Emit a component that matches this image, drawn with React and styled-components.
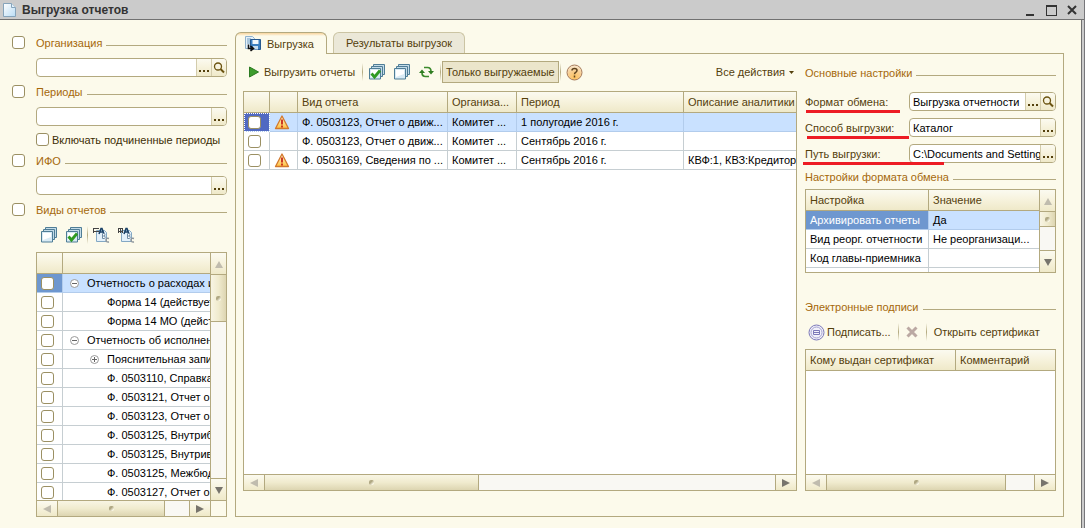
import React from "react";
import styled, { createGlobalStyle, css } from "styled-components";

const GlobalStyle = createGlobalStyle`
  * {
    box-sizing: border-box;
  }
  body {
    margin: 0;
    background: #fcfaeb;
  }
  body,
  button,
  input {
    font-family: "Liberation Sans", Arial, sans-serif;
    font-size: 11px;
    line-height: 14px;
    color: #54400c;
  }
  button {
    margin: 0;
    padding: 0;
    border: 0;
    background: none;
    white-space: nowrap;
  }
`;

const border = "#b3a97f";
const headFill = "linear-gradient(#fbfaf0, #f7f3de 45%, #efe9c9)";

const WindowStyled = styled.div`
  display: flex;
  flex-direction: column;
  height: 100vh;
  min-height: 480px;
  border-right: 1px solid #77777a;
  background: #cbcbcb;
`;

const TitleBar = styled.header`
  display: flex;
  align-items: center;
  flex: none;
  height: 20px;
  padding: 0 5px 0 3px;
  gap: 6px;
  border-bottom: 1px solid #717171;
  h1 {
    flex: 1;
    margin: 0;
    font-size: 12px;
    line-height: 16px;
    font-weight: 700;
    color: #333;
  }
`;

const WindowButtons = styled.div`
  display: flex;
  gap: 7px;
  button {
    width: 14px;
    height: 14px;
  }
  svg {
    display: block;
  }
`;

const Content = styled.main`
  display: flex;
  flex: 1;
  min-height: 0;
  margin-right: 2px;
  padding: 12px 17px 11px 12px;
  gap: 8px;
  border-right: 1px solid #717171;
  background: #fcfaeb;
`;

const Sidebar = styled.aside`
  display: flex;
  flex-direction: column;
  flex: none;
  width: 215px;
  gap: 7px;
  padding-top: 3px;
`;

const Indent = styled.div`
  display: flex;
  flex-direction: column;
  margin-left: 24px;
  ${(props) =>
    props.$fill &&
    css`
      flex: 1;
      min-height: 0;
    `}
`;

const CheckBox = styled.input.attrs({ type: "checkbox" })`
  appearance: none;
  display: block;
  flex: none;
  width: 13px;
  height: 13px;
  margin: 0;
  border: 1px solid #9b9063;
  border-radius: 3px;
  background: #fff;
`;

const CheckLabel = styled.label`
  display: flex;
  align-items: center;
  height: 13px;
  gap: 3px;
  white-space: nowrap;
  color: #3d2e05;
`;

const LegendStyled = styled.div`
  display: flex;
  align-items: center;
  flex: none;
  height: 16px;
  gap: 4px;
  color: #a5680a;
  white-space: nowrap;
  label {
    display: flex;
    gap: 11px;
  }
  &::after {
    content: "";
    flex: 1;
    height: 1px;
    margin-top: 4px;
    background: ${border};
  }
`;

const ComboStyled = styled.div`
  display: flex;
  flex: ${(props) => (props.$grow ? "1" : "none")};
  min-width: 0;
  height: 19px;
  border: 1px solid ${border};
  border-radius: 4px;
  background: #fff;
  overflow: hidden;
  input {
    flex: 1;
    width: 0;
    min-width: 0;
    padding: 0 0 0 3px;
    border: 0;
    outline: 0;
    background: none;
    color: #000;
  }
  button {
    display: flex;
    align-items: center;
    justify-content: center;
    width: 15px;
    border-left: 1px solid #d3ccac;
    background: ${headFill};
  }
`;

const Toolbar = styled.div`
  display: flex;
  align-items: center;
  flex: none;
  height: ${(props) => props.$height || 20}px;
`;

const Separator = styled.span`
  width: 1px;
  height: 18px;
  margin: 0 1px;
  background: linear-gradient(#fcfaeb, #b3a97f, #fcfaeb);
`;

const IconButton = styled.button`
  display: flex;
  align-items: center;
  justify-content: center;
  width: 25px;
  height: 20px;
`;

const TextButton = styled.button`
  display: flex;
  align-items: center;
  height: 22px;
  gap: ${(props) => props.$gap || 5}px;
  padding: ${(props) => props.$padding || "0 6px"};
`;

const ToggleButton = styled.button`
  height: 22px;
  padding: 0 3px;
  border: 1px solid ${border};
  background: #ebe5cb;
`;

const Push = styled.div`
  margin-left: auto;
`;

const GridFrame = styled.div`
  display: grid;
  grid-template-columns: minmax(0, 1fr) auto;
  grid-template-rows: minmax(0, 1fr) auto;
  min-height: 0;
  border: 1px solid ${border};
  background: #fff;
  ${(props) =>
    props.$height
      ? css`
          flex: none;
          height: ${props.$height}px;
        `
      : css`
          flex: 1;
        `}
`;

const Clip = styled.div`
  min-width: 0;
  min-height: 0;
  overflow: hidden;
`;

const Table = styled.table`
  width: 100%;
  table-layout: fixed;
  border-collapse: separate;
  border-spacing: 0;
  th,
  td {
    padding: 0 0 0 4px;
    overflow: hidden;
    white-space: nowrap;
    text-align: left;
  }
  th:not(:last-child) {
    border-right: 1px solid ${border};
  }
  td:not(:last-child) {
    border-right: 1px solid #c6ced2;
  }
  th {
    height: 21px;
    border-bottom: 1px solid ${border};
    background: ${headFill};
    font-weight: 400;
  }
  td {
    height: 19px;
    border-bottom: 1px solid #c6ced2;
    color: #000;
  }
  td > svg {
    display: block;
  }
`;

const Row = styled.tr`
  ${(props) =>
    props.$selected &&
    css`
      && td {
        background: #c9e1ff;
        border-color: #b2ccec;
      }
      && td:first-child {
        background: ${props.$focus ? "#5069c2" : "#6e97cf"};
        color: #fff;
        ${props.$focus && "outline: 1px dotted #fff; outline-offset: -1px;"}
      }
    `}
`;

const TreeLabel = styled.span`
  display: flex;
  align-items: center;
  gap: 8px;
  padding-left: ${(props) => props.$indent}px;
  svg {
    flex: none;
  }
`;

const ScrollStyled = styled.div`
  display: flex;
  flex-direction: ${(props) => (props.$vertical ? "column" : "row")};
  background: #f9f8f3;
  ${(props) =>
    props.$vertical
      ? css`
          width: 16px;
          border-left: 1px solid ${border};
        `
      : css`
          height: 16px;
          border-top: 1px solid ${border};
        `}
  button {
    display: flex;
    align-items: center;
    justify-content: center;
    flex: none;
    background: ${headFill};
    ${(props) => (props.$vertical ? "height: 21px;" : "width: 20px;")}
  }
`;

const Thumb = styled.div`
  display: flex;
  align-items: center;
  justify-content: center;
  flex: none;
  border: 0 solid ${border};
  &::after {
    content: "";
    width: 5px;
    height: 5px;
    border-radius: 2px;
    background: linear-gradient(135deg, #b0a883 40%, #faf7e6 80%);
  }
  ${(props) =>
    props.$vertical
      ? css`
          height: ${props.$size};
          border-width: 1px 0;
          background: linear-gradient(90deg, #f8f5e4, #f0ebce 50%, #ddd5b1);
        `
      : css`
          width: ${props.$size};
          border-width: 0 1px;
          background: linear-gradient(#f8f5e4, #f0ebce 50%, #ddd5b1);
        `}
`;

const Track = styled.div`
  flex: 1;
  border: 0 solid ${border};
  ${(props) =>
    props.$vertical ? "border-bottom-width: 1px;" : "border-right-width: 1px;"}
`;

const Corner = styled.div`
  border-top: 1px solid ${border};
  border-left: 1px solid ${border};
  background: #fcfaeb;
`;

const Workspace = styled.section`
  display: flex;
  flex-direction: column;
  flex: 1;
  min-width: 0;
`;

const TabList = styled.div`
  display: flex;
  align-items: flex-end;
  flex: none;
  height: 21px;
  gap: 6px;
`;

const Tab = styled.button`
  display: flex;
  align-items: center;
  height: 21px;
  padding: 0 12px;
  border: 1px solid #cbc4a3;
  border-bottom: 0;
  border-radius: 6px 6px 0 0;
  background: #ebe8d8;
  ${(props) =>
    props.$active &&
    css`
      position: relative;
      height: 22px;
      margin-bottom: -1px;
      padding: 0 12px 0 9px;
      gap: 6px;
      border-color: ${border};
      background: linear-gradient(#f9d49c, #fcfaeb 3px);
    `}
`;

const Panel = styled.div`
  display: flex;
  flex: 1;
  min-height: 0;
  gap: 8px;
  padding: 7px 7px 25px;
  border: 1px solid ${border};
`;

const Reports = styled.div`
  display: flex;
  flex-direction: column;
  flex: 1;
  min-width: 0;
  gap: 8px;
`;

const Settings = styled.div`
  display: flex;
  flex-direction: column;
  flex: none;
  width: 251px;
  padding-top: 4px;
`;

const FieldList = styled.div`
  display: flex;
  flex-direction: column;
  gap: 7px;
  padding: 11px 0 6px;
`;

const Field = styled.div`
  display: flex;
  align-items: center;
  position: relative;
  label {
    width: 104px;
    white-space: nowrap;
  }
  /* red marker stroke under the caption */
  &::after {
    content: "";
    position: absolute;
    left: ${(props) => props.$from}px;
    bottom: -2px;
    width: ${(props) => props.$length}px;
    height: 3px;
    background: #ed1c24;
  }
`;

const TableGap = styled.div`
  display: flex;
  flex-direction: column;
  padding: 4px 0 26px;
`;

const Signatures = styled.div`
  display: flex;
  flex-direction: column;
  flex: 1;
  min-height: 0;
  gap: 6px;
`;

const DocIcon = () => (
  <svg width="13" height="16" viewBox="0 0 13 16">
    <defs>
      <linearGradient id="doc" x1="0" y1="0" x2="1" y2="1">
        <stop offset="0" stopColor="#fff" />
        <stop offset="1" stopColor="#b9dcf4" />
      </linearGradient>
    </defs>
    <path d="M.5 1.500h8l4 4v9H.5z" fill="url(#doc)" stroke="#86a4bb" />
    <path d="M8.500 1.500v4h4" fill="#e3f1fb" stroke="#86a4bb" />
  </svg>
);

const SearchIcon = () => (
  <svg width="12" height="12" viewBox="0 0 12 12" fill="none" stroke="#6b5310">
    <circle cx="5" cy="4.500" r="3.500" strokeWidth="1.300" />
    <path d="M7.500 7l3.500 3.500" strokeWidth="2" />
  </svg>
);

const DotsIcon = () => (
  <svg width="11" height="13" viewBox="0 0 11 13" fill="#54400c">
    <path d="M0 9h2v2H0zM4 9h2v2H4zM8 9h2v2H8z" />
  </svg>
);

const StackIcon = ({ checked }) => (
  <svg width="16" height="16" viewBox="0 0 16 16">
    <g fill="#c3dbe8" stroke="#4f7d96">
      <path d="M4.500.5h11v10h-11z" />
      <path d="M2.500 2.500h11v10h-11z" />
      <path d="M.5 4.500h11v10.500H.5z" fill="#d9ebf5" />
    </g>
    <path d="M2 6h8v4L2 13z" fill="#fff" />
    {checked && (
      <path
        d="M2.500 9.500l3 3.500 5.500-6.500"
        fill="none"
        stroke="#2f9a22"
        strokeWidth="2.800"
      />
    )}
  </svg>
);

const TreeIcon = ({ plus }) => (
  <svg width="17" height="16" viewBox="0 0 17 16">
    <path d="M3.500 3.500h8l2 2v9h-10z" fill="#e3f0fa" stroke="#83a8c4" />
    {plus ? (
      <path d="M0 1.500h5M0 4.500h5M.5 1v5M2.500 1v5M4.500 1v5" stroke="#444" />
    ) : (
      <path d="M0 1.500h6M0 4.500h6M.5 1v5" stroke="#444" />
    )}
    <path
      d="M6 7l2-5.500h1L11 7M7 5h3"
      fill="none"
      stroke="#173f66"
      strokeWidth="1.500"
    />
    <path
      d="M9.500 6.500v5h2q1.500-1.300 0-2.500 1-1.500-.3-2.500zM9.500 9h2"
      fill="#fff"
      stroke="#6d8ba4"
    />
    <path
      d="M16 11.500q-3-1-3 1.500t3 2"
      fill="none"
      stroke="#8d969d"
      strokeWidth="1.500"
    />
  </svg>
);

const ExportIcon = () => (
  <svg width="16" height="16" viewBox="0 0 16 16">
    <path d="M.5.5h7l2 2v10h-9z" fill="#e4f0f9" stroke="#8fb1cc" />
    <path d="M2 3h4M2 5h3M2 7h3" stroke="#6f9cc0" />
    <path d="M5.500 3.500h10v10h-10z" fill="#3c7fc0" stroke="#27598f" />
    <path d="M7.500 4h6v4h-6z" fill="#f2f8fd" />
    <path d="M8 10h5v3.500H8z" fill="#c9dff0" />
    <path
      d="M3.500 8.500v4h4M5.500 10l3 2.500-3 2.500"
      fill="none"
      stroke="#111"
      strokeWidth="1.600"
    />
  </svg>
);

const PlayIcon = () => (
  <svg width="10" height="12" viewBox="0 0 10 12">
    <path d="M.5 1l9 5-9 5z" fill="#3d9c2c" stroke="#2c7a22" />
  </svg>
);

const RefreshIcon = () => (
  <svg width="15" height="12" viewBox="0 0 15 12">
    <g fill="none" stroke="#3c8a2c" strokeWidth="1.700">
      <path d="M5 1.500h3.500q3.500 0 3.500 4" />
      <path d="M10 10.500H6.500Q3 10.500 3 6.500" />
    </g>
    <path d="M9 5h6l-3 3.500zM0 7h6L3 3.500z" fill="#2f7d22" />
  </svg>
);

const HelpIcon = () => (
  <svg width="17" height="17" viewBox="0 0 17 17">
    <defs>
      <radialGradient id="help" cx=".5" cy=".85" r=".8">
        <stop offset="0" stopColor="#ffc25c" />
        <stop offset=".6" stopColor="#f8cf94" />
        <stop offset="1" stopColor="#f9e6cc" />
      </radialGradient>
    </defs>
    <circle cx="8.500" cy="8.500" r="7.500" fill="url(#help)" stroke="#a67c5c" />
    <path
      d="M6 6.500Q6 4.500 8.500 4.500T11 6.500q0 1-1.300 1.800-1.200.7-1.200 2M8.500 11.500v2"
      fill="none"
      stroke="#5f4420"
      strokeWidth="1.500"
    />
  </svg>
);

const WarningIcon = () => (
  <svg width="16" height="15" viewBox="0 0 16 15">
    <defs>
      <linearGradient id="warn" x1="0" y1="0" x2="0" y2="1">
        <stop offset="0" stopColor="#fff6d8" />
        <stop offset="1" stopColor="#ffc23f" />
      </linearGradient>
    </defs>
    <path
      d="M8 1l6.500 12.500h-13z"
      fill="url(#warn)"
      stroke="#d2782c"
      strokeWidth="1.300"
      strokeLinejoin="round"
    />
    <path d="M8 4.500v5M8 10.500v2" stroke="#c8261a" strokeWidth="1.800" />
  </svg>
);

const SignIcon = () => (
  <svg width="17" height="17" viewBox="0 0 17 17" fill="none" stroke="#7b78b8">
    <circle cx="8.500" cy="8.500" r="7.500" fill="#f2f1fa" />
    <circle cx="8.500" cy="8.500" r="5.500" stroke="#a3a1cf" />
    <path d="M5.500 6.500h6v4h-6zM5 8.500h7" />
  </svg>
);

const DeleteIcon = () => (
  <svg width="12" height="12" viewBox="0 0 12 12">
    <path
      d="M1.500 1.500l9 9M10.500 1.500l-9 9"
      stroke="#bba9a3"
      strokeWidth="3"
    />
  </svg>
);

const NodeIcon = ({ plus }) => (
  <svg width="9" height="9" viewBox="0 0 9 9" fill="none" stroke="#999">
    <circle cx="4.500" cy="4.500" r="4" fill="#fff" />
    <path d={plus ? "M2 4.500h5M4.500 2v5" : "M2 4.500h5"} stroke="#666" />
  </svg>
);

const arrows = {
  up: "M4 1l4 7H0z",
  down: "M0 1h8L4 8z",
  left: "M0 4l8-4v8z",
  right: "M8 4L0 0v8z",
};

const Arrow = ({ to, dim }) => (
  <svg width="8" height="8" viewBox="0 0 8 8" fill={dim ? "#c0bcae" : "#77746c"}>
    <path d={arrows[to]} />
  </svg>
);

const Legend = ({ title, check }) => (
  <LegendStyled>
    {check ? (
      <label>
        <CheckBox />
        {title}
      </label>
    ) : (
      <span>{title}</span>
    )}
  </LegendStyled>
);

const Combo = ({ id, label, value = "", search, grow }) => (
  <ComboStyled $grow={grow}>
    <input id={id} type="text" aria-label={label} defaultValue={value} />
    <button type="button" aria-label="Выбрать">
      <DotsIcon />
    </button>
    {search && (
      <button type="button" aria-label="Открыть">
        <SearchIcon />
      </button>
    )}
  </ComboStyled>
);

const Scroll = ({ vertical, size }) => (
  <ScrollStyled $vertical={vertical}>
    <button type="button" aria-label="Назад">
      <Arrow to={vertical ? "up" : "left"} dim />
    </button>
    <Thumb $vertical={vertical} $size={size} />
    <Track $vertical={vertical} />
    <button type="button" aria-label="Вперед">
      <Arrow to={vertical ? "down" : "right"} />
    </button>
  </ScrollStyled>
);

const reportTypes = [
  { title: "Отчетность о расходах и", level: 0, node: "minus" },
  { title: "Форма 14 (действует", level: 2 },
  { title: "Форма 14 МО (дейст", level: 2 },
  { title: "Отчетность об исполнен", level: 0, node: "minus" },
  { title: "Пояснительная запи", level: 1, node: "plus" },
  { title: "Ф. 0503110, Справка", level: 2 },
  { title: "Ф. 0503121, Отчет о", level: 2 },
  { title: "Ф. 0503123, Отчет о", level: 2 },
  { title: "Ф. 0503125, Внутриб", level: 2 },
  { title: "Ф. 0503125, Внутрив", level: 2 },
  { title: "Ф. 0503125, Межбюд", level: 2 },
  { title: "Ф. 0503127, Отчет о", level: 2 },
];
const indents = [3, 23, 40];

const reports = [
  {
    warn: true,
    type: "Ф. 0503123, Отчет о движ...",
    org: "Комитет ...",
    period: "1 полугодие 2016 г.",
    note: "",
  },
  {
    type: "Ф. 0503123, Отчет о движ...",
    org: "Комитет ...",
    period: "Сентябрь 2016 г.",
    note: "",
  },
  {
    warn: true,
    type: "Ф. 0503169, Сведения по ...",
    org: "Комитет ...",
    period: "Сентябрь 2016 г.",
    note: "КВФ:1, КВЗ:Кредитор",
  },
];

const fields = [
  {
    id: "format",
    label: "Формат обмена:",
    value: "Выгрузка отчетности",
    search: true,
    from: 1,
    length: 94,
  },
  {
    id: "method",
    label: "Способ выгрузки:",
    value: "Каталог",
    from: 2,
    length: 102,
  },
  {
    id: "path",
    label: "Путь выгрузки:",
    value: "C:\\Documents and Setting",
    from: -2,
    length: 141,
  },
];

const options = [
  ["Архивировать отчеты", "Да"],
  ["Вид реорг. отчетности", "Не реорганизаци..."],
  ["Код главы-приемника", ""],
  ["", ""],
];

const Filters = () => (
  <Sidebar>
    <Legend check title="Организация" />
    <Indent>
      <Combo label="Организация" search />
    </Indent>
    <Legend check title="Периоды" />
    <Indent>
      <Combo label="Периоды" />
    </Indent>
    <Indent>
      <CheckLabel>
        <CheckBox />
        Включать подчиненные периоды
      </CheckLabel>
    </Indent>
    <Legend check title="ИФО" />
    <Indent>
      <Combo label="ИФО" />
    </Indent>
    <Legend check title="Виды отчетов" />
    <Indent>
      <Toolbar>
        <IconButton type="button" aria-label="Снять флажки">
          <StackIcon />
        </IconButton>
        <IconButton type="button" aria-label="Установить флажки">
          <StackIcon checked />
        </IconButton>
        <Separator />
        <IconButton type="button" aria-label="Свернуть">
          <TreeIcon />
        </IconButton>
        <IconButton type="button" aria-label="Развернуть">
          <TreeIcon plus />
        </IconButton>
      </Toolbar>
    </Indent>
    <Indent $fill>
      <GridFrame>
        <Clip>
          <Table>
            <colgroup>
              <col width="26" />
              <col />
            </colgroup>
            <thead>
              <tr>
                <th />
                <th />
              </tr>
            </thead>
            <tbody>
              {reportTypes.map((item, index) => (
                <Row key={index} $selected={index === 0}>
                  <td>
                    <CheckBox aria-label={item.title} />
                  </td>
                  <td>
                    <TreeLabel $indent={indents[item.level]}>
                      {item.node && <NodeIcon plus={item.node === "plus"} />}
                      {item.title}
                    </TreeLabel>
                  </td>
                </Row>
              ))}
            </tbody>
          </Table>
        </Clip>
        <Scroll vertical size="48px" />
        <Scroll size="108px" />
        <Corner />
      </GridFrame>
    </Indent>
  </Sidebar>
);

const ReportList = () => (
  <Reports>
    <Toolbar $height={22}>
      <TextButton type="button">
        <PlayIcon />
        Выгрузить отчеты
      </TextButton>
      <Separator />
      <IconButton type="button" aria-label="Установить флажки">
        <StackIcon checked />
      </IconButton>
      <IconButton type="button" aria-label="Снять флажки">
        <StackIcon />
      </IconButton>
      <IconButton type="button" aria-label="Обновить">
        <RefreshIcon />
      </IconButton>
      <Separator />
      <ToggleButton type="button" aria-pressed="true">
        Только выгружаемые
      </ToggleButton>
      <Separator />
      <IconButton type="button" aria-label="Справка">
        <HelpIcon />
      </IconButton>
      <Push>
        <TextButton type="button" $gap={4} $padding="0 3px">
          Все действия
          <svg width="5" height="3" viewBox="0 0 5 3" fill="#54400c">
            <path d="M0 0h5L2.500 3z" />
          </svg>
        </TextButton>
      </Push>
    </Toolbar>
    <GridFrame>
      <Clip>
        <Table>
          <colgroup>
            <col width="26" />
            <col width="28" />
            <col width="150" />
            <col width="69" />
            <col width="167" />
            <col />
          </colgroup>
          <thead>
            <tr>
              <th />
              <th />
              <th>Вид отчета</th>
              <th>Организа...</th>
              <th>Период</th>
              <th>Описание аналитики</th>
            </tr>
          </thead>
          <tbody>
            {reports.map((item, index) => (
              <Row key={index} $selected={index === 0} $focus>
                <td>
                  <CheckBox aria-label={item.type} />
                </td>
                <td>{item.warn && <WarningIcon />}</td>
                <td>{item.type}</td>
                <td>{item.org}</td>
                <td>{item.period}</td>
                <td>{item.note}</td>
              </Row>
            ))}
          </tbody>
        </Table>
      </Clip>
      <div />
      <Scroll size="39%" />
    </GridFrame>
  </Reports>
);

const ExchangeSettings = () => (
  <Settings>
    <Legend title="Основные настройки" />
    <FieldList>
      {fields.map((item) => (
        <Field key={item.id} $from={item.from} $length={item.length}>
          <label htmlFor={item.id}>{item.label}</label>
          <Combo id={item.id} value={item.value} search={item.search} grow />
        </Field>
      ))}
    </FieldList>
    <Legend title="Настройки формата обмена" />
    <TableGap>
      <GridFrame $height={84}>
        <Clip>
          <Table>
            <colgroup>
              <col width="123" />
              <col />
            </colgroup>
            <thead>
              <tr>
                <th>Настройка</th>
                <th>Значение</th>
              </tr>
            </thead>
            <tbody>
              {options.map(([name, value], index) => (
                <Row key={index} $selected={index === 0}>
                  <td>{name}</td>
                  <td>{value}</td>
                </Row>
              ))}
            </tbody>
          </Table>
        </Clip>
        <Scroll vertical size="16px" />
      </GridFrame>
    </TableGap>
    <Signatures>
      <Legend title="Электронные подписи" />
      <Toolbar $height={22}>
        <TextButton type="button" $gap={2} $padding="0 6px 0 3px">
          <SignIcon />
          Подписать...
        </TextButton>
        <Separator />
        <IconButton type="button" aria-label="Удалить" disabled>
          <DeleteIcon />
        </IconButton>
        <Separator />
        <TextButton type="button">Открыть сертификат</TextButton>
      </Toolbar>
      <GridFrame>
        <Clip>
          <Table>
            <colgroup>
              <col width="150" />
              <col />
            </colgroup>
            <thead>
              <tr>
                <th>Кому выдан сертификат</th>
                <th>Комментарий</th>
              </tr>
            </thead>
          </Table>
        </Clip>
        <div />
        <Scroll size="180px" />
      </GridFrame>
    </Signatures>
  </Settings>
);

const App = () => {
  return (
    <>
      <GlobalStyle />
      <WindowStyled>
        <TitleBar>
          <DocIcon />
          <h1>Выгрузка отчетов</h1>
          <WindowButtons>
            <button type="button" aria-label="Свернуть">
              <svg width="14" height="14" viewBox="0 0 14 14">
                <path d="M3 11h8v2H3z" fill="#333" />
              </svg>
            </button>
            <button type="button" aria-label="Развернуть">
              <svg width="14" height="14" viewBox="0 0 14 14">
                <path d="M2 2h11v11H2zM3 4v8h9V4z" fill="#333" fillRule="evenodd" />
              </svg>
            </button>
            <button type="button" aria-label="Закрыть">
              <svg width="14" height="14" viewBox="0 0 14 14">
                <path d="M3 3l8 8M11 3l-8 8" stroke="#333" strokeWidth="2" />
              </svg>
            </button>
          </WindowButtons>
        </TitleBar>
        <Content>
          <Filters />
          <Workspace>
            <TabList role="tablist">
              <Tab type="button" role="tab" aria-selected="true" $active>
                <ExportIcon />
                Выгрузка
              </Tab>
              <Tab type="button" role="tab" aria-selected="false">
                Результаты выгрузок
              </Tab>
            </TabList>
            <Panel>
              <ReportList />
              <ExchangeSettings />
            </Panel>
          </Workspace>
        </Content>
      </WindowStyled>
    </>
  );
};

export default App;
